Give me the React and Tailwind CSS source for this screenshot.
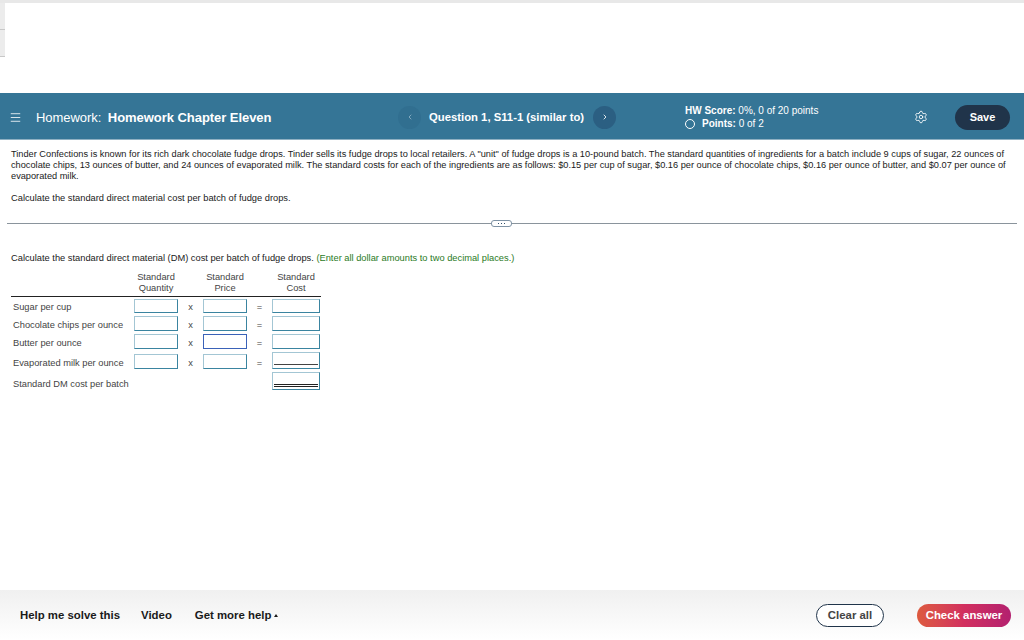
import React from "react";
import { Menu, ChevronLeft, ChevronRight, Settings } from "lucide-react";

const rows = [
  { label: "Sugar per cup", h: "h-[14px]", mt: "mt-[2px]", boxH: "h-[14px]", costH: "h-[14px]" },
  { label: "Chocolate chips per ounce", h: "h-[15px]", mt: "mt-[3px]", boxH: "h-[15px]", costH: "h-[15px]" },
  { label: "Butter per ounce", h: "h-[15px]", mt: "mt-[3px]", boxH: "h-[15px]", costH: "h-[15px]", blue: true },
  { label: "Evaporated milk per ounce", h: "h-[17px]", mt: "mt-[3px]", boxH: "h-[15px]", costH: "h-[17px]", line: true },
];

const Box = ({ className = "", blue, children }) => (
  <div
    className={`border bg-white ${
      blue
        ? "border-[#3a62b8]"
        : "border-[#3a84a0] border-t-[#a3c6d4] border-l-[#a3c6d4]"
    } ${className}`}
  >
    {children}
  </div>
);

const App = () => {
  return (
    <div className="relative h-[640px] w-[1024px] overflow-hidden bg-white font-['Liberation_Sans',Arial,sans-serif]">
      {/* browser strip */}
      <div className="h-[3px] bg-[#e8e8e8]" />
      <div className="h-[54px] w-[5px] border-b border-[#c8c8c8] bg-[#ececec]">
        <div className="h-[27px] border-b border-[#c8c8c8]" />
      </div>
      <div className="h-[36px]" />

      {/* Header */}
      <div className="flex h-[47px] items-center border-b border-[#8fb0c2] bg-[#357596] pt-[2px] text-white">
        <Menu size={13} strokeWidth={1.5} className="ml-[9px]" />
        <p className="ml-[14px] w-[362px] pt-[1px] text-[13px] tracking-[-0.05px]">
          Homework: <span className="ml-[3px] font-bold">Homework Chapter Eleven</span>
        </p>
        <div className="flex h-[23px] w-[23px] items-center justify-center rounded-full bg-[#316f90] text-[#a9c6d6]">
          <ChevronLeft size={8} strokeWidth={2} />
        </div>
        <p className="ml-[8px] w-[164px] text-[11.3px] font-bold">Question 1, S11-1 (similar to)</p>
        <div className="flex h-[23px] w-[23px] items-center justify-center rounded-full bg-[#2b5f82]">
          <ChevronRight size={8} strokeWidth={2.5} />
        </div>
        <div className="ml-[69px] w-[216px] pt-[1px] text-[10px] leading-[12.5px]">
          <p><span className="font-bold">HW Score:</span> 0%, 0 of 20 points</p>
          <p className="flex items-center">
            <span className="mr-[7px] inline-block h-[10px] w-[10px] rounded-full border border-white" />
            <span className="font-bold">Points:</span>&nbsp;0 of 2
          </p>
        </div>
        <Settings size={14} strokeWidth={1.5} className="ml-[13px]" />
        <button className="ml-[27px] h-[25px] w-[55px] rounded-full bg-[#20344a] text-[11px] font-bold text-white">
          Save
        </button>
      </div>

      {/* Question */}
      <div className="px-[11px] pt-[9px] text-[9.3px] leading-[11px] text-[#1a1a1a]">
        <p className="w-[1002px] text-[9.23px]">
          Tinder Confections is known for its rich dark chocolate fudge drops. Tinder sells its fudge drops to local retailers. A "unit" of fudge drops is a 10-pound batch. The standard quantities of ingredients for a batch include 9 cups of sugar, 22 ounces of chocolate chips, 13 ounces of butter, and 24 ounces of evaporated milk. The standard costs for each of the ingredients are as follows: $0.15 per cup of sugar, $0.16 per ounce of chocolate chips, $0.16 per ounce of butter, and $0.07 per ounce of evaporated milk.
        </p>
        <p className="mt-[11px]">Calculate the standard direct material cost per batch of fudge drops.</p>
      </div>

      {/* Divider */}
      <div className="relative mx-[7px] mt-[19px] h-px w-[1010px] bg-[#8a949c]">
        <div className="absolute left-[484px] top-[-3px] flex h-[7px] w-[21px] items-center justify-center gap-[2px] rounded-[3px] border border-[#7f93a5] bg-white">
          <span className="h-px w-px bg-[#33506b]" />
          <span className="h-px w-px bg-[#33506b]" />
          <span className="h-px w-px bg-[#33506b]" />
        </div>
      </div>

      {/* Work area */}
      <div className="px-[11px] pt-[29px] text-[9.3px] leading-[11px] text-[#1a1a1a]">
        <p>
          Calculate the standard direct material (DM) cost per batch of fudge drops.{" "}
          <span className="text-[#2a7a1e]">(Enter all dollar amounts to two decimal places.)</span>
        </p>

        <div className="mt-[8px] w-[310px] text-[#444]">
          <div className="flex h-[25px] items-start border-b border-[#222] text-center">
            <div className="w-[123px]" />
            <div className="w-[44px]">Standard<br />Quantity</div>
            <div className="w-[25px]" />
            <div className="w-[44px]">Standard<br />Price</div>
            <div className="w-[25px]" />
            <div className="w-[48px]">Standard<br />Cost</div>
          </div>
          {rows.map((row) => (
            <div key={row.label} className={`flex items-end ${row.mt} ${row.h}`}>
              <div className="w-[123px] pl-[2px]">{row.label}</div>
              <Box className={`w-[44px] ${row.boxH}`} />
              <div className="w-[25px] text-center">x</div>
              <Box className={`w-[44px] ${row.boxH}`} blue={row.blue} />
              <div className="w-[25px] text-center">=</div>
              <Box className={`w-[48px] ${row.costH}`}>
                {row.line && <div className="mx-[1px] mt-[11px] h-px bg-[#444]" />}
              </Box>
            </div>
          ))}
          <div className="mt-[3px] flex h-[18px] items-center">
            <div className="w-[261px] pt-[7px] pl-[2px]">Standard DM cost per batch</div>
            <Box className="h-full w-[48px]">
              <div className="mx-[1px] mt-[11px] h-[3px] border-y border-[#222]" />
            </Box>
          </div>
        </div>
      </div>

      {/* Footer */}
      <div className="absolute bottom-0 left-0 right-0 flex h-[50px] items-center bg-gradient-to-b from-[#f0f0f0] to-white text-[11.4px] font-bold text-[#1a1a1a]">
        <span className="ml-[20px] pt-[2px]">Help me solve this</span>
        <span className="ml-[21px] pt-[2px]">Video</span>
        <span className="ml-[23px] flex items-center pt-[2px]">
          Get more help
          <span className="ml-[3px] h-0 w-0 border-x-[2.5px] border-b-[3px] border-x-transparent border-b-[#1a1a1a]" />
        </span>
        <button className="ml-auto h-[23px] w-[68px] rounded-full border border-[#20344a] bg-white pt-[1px] font-bold text-[#444]">
          Clear all
        </button>
        <button className="ml-[33px] mr-[13px] h-[23px] w-[94px] rounded-full bg-gradient-to-r from-[#dd5a3e] via-[#d22f5e] to-[#b3206f] pt-[1px] font-bold text-white">
          Check answer
        </button>
      </div>
    </div>
  );
};

export default App;
